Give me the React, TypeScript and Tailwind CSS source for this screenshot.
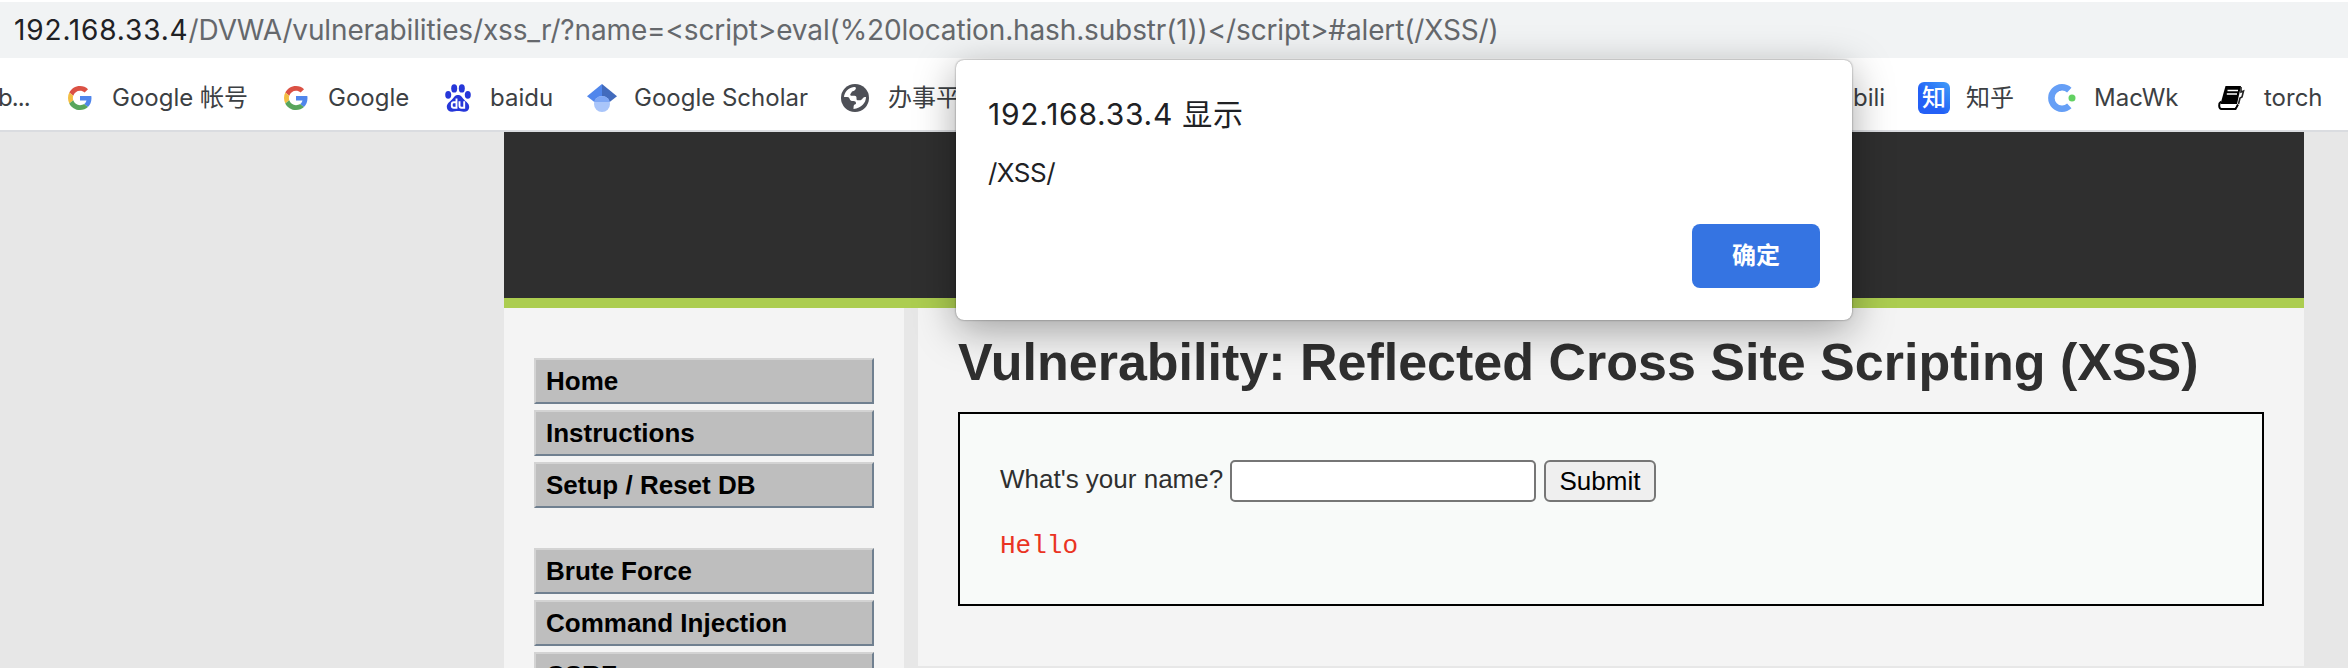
import type { ReactNode } from "react";

function GoogleG() {
  return (
    <svg viewBox="0 0 48 48" className="h-6 w-6 shrink-0">
      <path fill="#db5144" d="M24 9.5c3.54 0 6.71 1.22 9.21 3.6l6.85-6.85C35.9 2.38 30.47 0 24 0 14.62 0 6.51 5.38 2.56 13.22l7.98 6.19C12.43 13.72 17.74 9.5 24 9.5z" />
      <path fill="#5086ec" d="M46.98 24.55c0-1.57-.15-3.09-.38-4.55H24v9.02h12.94c-.58 2.96-2.26 5.48-4.78 7.18l7.73 6c4.51-4.18 7.09-10.36 7.09-17.65z" />
      <path fill="#f3be42" d="M10.53 28.59c-.48-1.45-.76-2.99-.76-4.59s.27-3.14.76-4.59l-7.98-6.19C.92 16.46 0 20.12 0 24c0 3.88.92 7.54 2.56 10.78l7.97-6.19z" />
      <path fill="#58a55c" d="M24 48c6.48 0 11.93-2.13 15.89-5.81l-7.73-6c-2.15 1.45-4.92 2.3-8.16 2.3-6.26 0-11.57-4.22-13.47-9.91l-7.98 6.19C6.51 42.62 14.62 48 24 48z" />
    </svg>
  );
}

function Baidu() {
  return (
    <svg viewBox="0 0 26 28" className="h-7 w-[26px] shrink-0">
      <g fill="#2637d9">
        <ellipse cx="9.2" cy="4.400" rx="3" ry="4.200" />
        <ellipse cx="16.800" cy="4.400" rx="3" ry="4.200" />
        <ellipse cx="3.200" cy="10.800" rx="3" ry="3.900" />
        <ellipse cx="22.800" cy="10.800" rx="3" ry="3.900" />
        <path d="M13 11c3.200 0 4 2.400 6 4.600 2.200 2.400 5.400 4.200 5.200 7.600-.2 3.400-2.700 4.700-5.600 4.500-2.200-.2-3.400-.6-5.600-.6s-3.800.6-5.800.6c-3.200 0-5.300-1.600-5.400-4.700-.1-3.200 3-5.100 5.200-7.400 2-2.300 2.800-4.600 6-4.600z" />
      </g>
      <g fill="none" stroke="#fff" strokeWidth="1.900">
        <path d="M11.500 14.500v10.200M11.500 18.300H8.800a2 2 0 0 0-2 2v1.500a2 2 0 0 0 2 2h2.700" />
        <path d="M14.500 17.300v4.500a2 2 0 0 0 2 2h2.700v-6.500" />
      </g>
    </svg>
  );
}

function Scholar() {
  return (
    <svg viewBox="0 0 30 28" className="h-7 w-[30px] shrink-0">
      <path fill="#5086ec" d="M15 0 0 12.200 8 18.500h7z" />
      <path fill="#426bbd" d="M15 0l15 12.200-8 6.300h-7z" />
      <circle cx="15" cy="20" r="8" fill="#a9c5fa" />
      <path fill="#7ea7f5" d="M7.300 18a8 8 0 0 1 15.400 0z" />
    </svg>
  );
}

function Globe() {
  return (
    <svg viewBox="0 0 28 28" className="h-7 w-7 shrink-0">
      <circle cx="14" cy="14" r="14" fill="#4e5057" />
      <path
        fill="#fff"
        d="M3 13C3.300 8.500 7 3.800 13 3c1.700-.2 2.300.7 1.700 2-.5 1.200-1.700 1.900-3.100 2.300-1.300.4-1.100 1.800-2 2.500-.6.500-.4 1.900.6 1.900h3.300c1.400 0 2 .8 2 2v1.300c0 .8.700 1.300 1.600 1.300h1.500c1.500 0 2.200-.8 3-1.900.8-1 1.900-1.400 3.400-1.400 0 5.600-4.400 11.300-12.500 12 .2-1.600-.1-3 .6-3.900.7-.8 1.900-.5 1.900-1.800 0-1.600-1-2.400-2.500-2.400H11c-1.400 0-2-.7-2.300-1.800C8.300 13.700 7.700 13 6.300 13z"
      />
    </svg>
  );
}

function MacWkIcon() {
  return (
    <svg viewBox="0 0 28 28" className="h-7 w-7 shrink-0">
      <path fill="none" stroke="#669ff6" strokeWidth="6.500" d="M21.300 6.100A10.700 10.700 0 1 0 21.300 21.900" />
      <path fill="#4f86ea" d="M7.500 10.500C9 7 12 5.500 14.500 5.800 11 6.500 9 8 7.500 10.500z" />
      <circle cx="24" cy="14" r="3.500" fill="#62d162" />
    </svg>
  );
}

function Book() {
  return (
    <svg viewBox="0 0 27 24" className="h-6 w-[27px] shrink-0">
      <path d="M7.500 0H23L19 18H2.500z" />
      <path d="M9.500 4.500H20M8.800 8H19" stroke="#fff" strokeWidth="1.500" />
      <path d="M3 15.500C.5 17 .5 23 3.500 23H17.500l2.500-4.500" fill="none" stroke="#000" strokeWidth="2" />
      <path d="M3 19.500h15" stroke="#fff" strokeWidth="2" />
      <path d="M23 1v5l2.500-1-1.500 6-2 1-1.500 6" fill="none" stroke="#222" strokeWidth="1.600" />
    </svg>
  );
}

function Zhihu() {
  return (
    <span className="flex h-8 w-8 items-center justify-center rounded-[6px] bg-linear-to-bl from-[#459df8] to-[#2460f6] to-60% text-[24px] font-medium text-white">
      知
    </span>
  );
}

interface BookmarkProps {
  className: string;
  icon?: ReactNode;
  label: string;
}

function Bookmark({ className, icon, label }: BookmarkProps) {
  return (
    <div className={"flex shrink-0 items-center whitespace-nowrap " + className}>
      {icon}
      <span>{label}</span>
    </div>
  );
}

const MENU = [
  ["Home", "Instructions", "Setup / Reset DB"],
  ["Brute Force", "Command Injection", "CSRF"],
];

export default function App() {
  return (
    <div className="relative flex h-[668px] w-[2348px] flex-col overflow-hidden bg-[#e7e7e7] font-['Inter','Noto_Sans_CJK_SC',sans-serif]">
      <div className="h-[58px] shrink-0 border-t-2 border-white bg-[#f1f3f4] pl-[14px] text-[28px] leading-[57px] tracking-[-0.14px] whitespace-nowrap text-[#65686c]">
        <span className="tracking-[0.85px] text-[#202124]">192.168.33.4</span>
        <span>{"/DVWA/vulnerabilities/xss_r/?name=<script>eval(%20location.hash.substr(1))</script>#alert(/XSS/)"}</span>
      </div>
      <div className="flex h-[74px] shrink-0 items-center border-b-2 border-[#dadce0] bg-white pt-2 text-[24px] text-[#3c4043]">
        <Bookmark className="-ml-0.5 w-[70px] tracking-[-0.9px]" label="b..." />
        <Bookmark className="w-[216px] gap-5" icon={<GoogleG />} label="Google 帐号" />
        <Bookmark className="w-[161px] gap-5" icon={<GoogleG />} label="Google" />
        <Bookmark className="w-[142px] gap-[19px]" icon={<Baidu />} label="baidu" />
        <Bookmark className="w-[254px] gap-[17px]" icon={<Scholar />} label="Google Scholar" />
        <Bookmark className="w-[1012px] gap-[19px]" icon={<Globe />} label="办事平台" />
        <Bookmark className="w-[65px]" label="bili" />
        <Bookmark className="w-[130px] gap-4" icon={<Zhihu />} label="知乎" />
        <Bookmark className="w-[170px] gap-[18px]" icon={<MacWkIcon />} label="MacWk" />
        <Bookmark className="w-[120px] gap-[19px]" icon={<Book />} label="torch" />
      </div>

      <div className="ml-[504px] flex w-[1800px] grow flex-col font-['Liberation_Sans',Arial,sans-serif]">
        <div className="h-[176px] shrink-0 border-b-[10px] border-[#accd50] bg-[#2f2f2f]" />
        <div className="flex h-[360px] gap-[14px]">
          <nav className="flex w-[400px] shrink-0 flex-col gap-10 overflow-hidden bg-[#f4f4f4] px-[30px] pt-[50px]">
            {MENU.map((group) => (
              <ul key={group[0]} className="flex flex-col gap-[6px]">
                {group.map((item) => (
                  <li
                    key={item}
                    className="h-[46px] shrink-0 border-2 border-t-[#d3d3d3] border-r-[#708090] border-b-[#708090] border-l-[#d3d3d3] bg-[#bebebe] pl-[10px] text-[26px] leading-[42px] font-bold text-black"
                  >
                    {item}
                  </li>
                ))}
              </ul>
            ))}
          </nav>
          <main className="h-[358px] w-[1386px] bg-[#f4f4f4] pl-10 text-[#2f2f2f]">
            <h1 className="h-[104px] pt-[23px] text-[52px] leading-[62px] font-bold whitespace-nowrap">
              Vulnerability: Reflected Cross Site Scripting (XSS)
            </h1>
            <div className="h-[194px] w-[1306px] border-2 border-black bg-[#f8faf9] px-10 pt-[46px]">
              <form className="flex h-[42px] items-center" onSubmit={(e) => e.preventDefault()}>
                <label className="w-[230px] pb-[5px] text-[26px] leading-[38px] whitespace-nowrap">What's your name?</label>
                <input className="h-[42px] w-[306px] rounded-[5px] border-2 border-[#767676] bg-white px-2 text-[26px] outline-none" />
                <button className="ml-2 h-[42px] w-28 rounded-[6px] border-2 border-[#767676] bg-[#efefef] text-[26px] leading-[38px] text-black">
                  Submit
                </button>
              </form>
              <pre className="mt-[29px] font-['Liberation_Mono','Courier_New',monospace] text-[26px] leading-[30px] text-[#ea3323]">Hello</pre>
            </div>
          </main>
        </div>
      </div>

      <div className="absolute top-[60px] left-[956px] flex h-[260px] w-[896px] flex-col rounded-[8px] bg-white px-8 pt-8 text-[#202124] shadow-[0_0_2px_rgba(0,0,0,0.5),0_10px_40px_rgba(0,0,0,0.35)]">
        <div className="text-[30px] leading-[44px] tracking-[0.75px] whitespace-nowrap">192.168.33.4 显示</div>
        <div className="mt-[20px] text-[26px] leading-[34px] tracking-[-0.5px]">/XSS/</div>
        <button className="mt-[34px] h-16 w-32 self-end rounded-[8px] bg-[#3574e2] text-[24px] font-bold text-white">确定</button>
      </div>
    </div>
  );
}
